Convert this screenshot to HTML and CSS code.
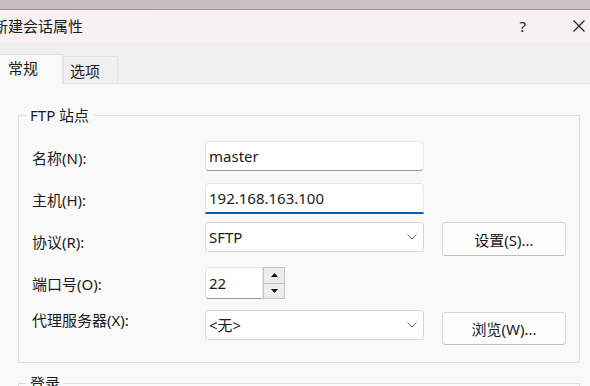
FILE: index.html
```html
<!DOCTYPE html>
<html lang="zh-CN">
<head>
    <meta charset="UTF-8">
    <title>新建会话属性</title>
    <link rel="stylesheet" href="styles.css">
</head>
<body>
    <div class="desk"></div>
    <div class="window">
        <div class="titlebar">
            <span class="title">新建会话属性</span>
            <span class="help">?</span>
            <span class="close">
                <svg width="12" height="12" viewBox="0 0 12 12"><path d="M0.5 0.5 L11.5 11.5 M11.5 0.5 L0.5 11.5" stroke="#1b1b1b" stroke-width="1.1" fill="none"/></svg>
            </span>
        </div>

        <div class="tabstrip">
            <div class="tab active">常规</div>
            <div class="tab">选项</div>
        </div>

        <div class="panel">
            <fieldset class="group">
                <legend>FTP 站点</legend>
                <div class="form">
                    <label class="lbl">名称(N):</label>
                    <div class="field"><div class="input">master</div></div>
                    <div></div>

                    <label class="lbl">主机(H):</label>
                    <div class="field"><div class="input focused">192.168.163.100</div></div>
                    <div></div>

                    <label class="lbl lbl-low">协议(R):</label>
                    <div class="field">
                        <div class="select">SFTP <svg class="chev" width="10" height="6" viewBox="0 0 10 6"><path d="M0.5 0.5 L5 5 L9.5 0.5" stroke="#606060" fill="none"/></svg></div>
                    </div>
                    <div><button class="btn">设置(S)...</button></div>

                    <label class="lbl">端口号(O):</label>
                    <div class="field port">
                        <div class="input num">22</div>
                        <div class="spin">
                            <span class="arrow"><svg width="7" height="4" viewBox="0 0 7 4"><path d="M3.5 0 L7 4 L0 4 Z" fill="#111"/></svg></span>
                            <span class="arrow"><svg width="7" height="4" viewBox="0 0 7 4"><path d="M0 0 L7 0 L3.5 4 Z" fill="#111"/></svg></span>
                        </div>
                    </div>
                    <div></div>

                    <label class="lbl lbl-high">代理服务器(X):</label>
                    <div class="field">
                        <div class="select">&lt;无&gt; <svg class="chev" width="10" height="6" viewBox="0 0 10 6"><path d="M0.5 0.5 L5 5 L9.5 0.5" stroke="#606060" fill="none"/></svg></div>
                    </div>
                    <div><button class="btn btn-low">浏览(W)...</button></div>
                </div>
            </fieldset>

            <fieldset class="group login">
                <legend>登录</legend>
                <div class="form"></div>
            </fieldset>
        </div>
    </div>
</body>
</html>
```

FILE: styles.css
```css
body {
    margin: 0;
    width: 590px;
    height: 386px;
    overflow: hidden;
    background: #f9f9f9;
    font-family: "Noto Sans", "Noto Sans CJK SC", sans-serif;
    font-size: 15px;
    color: #1b1b1b;
}

.desk {
    height: 9px;
    background: linear-gradient(90deg, #c7bdbd, #cec4c4);
    border-bottom: 1px solid #9e9595;
}

.titlebar {
    display: flex;
    align-items: center;
    height: 32px;
    background: #f7f1f1;
}

.title {
    flex: 1;
    margin-left: -7px;
    line-height: 20px;
}

.help {
    margin-right: 47px;
    font-size: 15px;
    line-height: 20px;
}

.close {
    display: flex;
    margin-right: 5px;
}

.tabstrip {
    display: flex;
    align-items: flex-end;
    height: 41px;
    background: #f0f0f0;
}

.tab {
    box-sizing: border-box;
    height: 27px;
    width: 55px;
    padding-left: 6px;
    line-height: 28px;
    background: #f0f0f0;
    border: 1px solid #e3e3e3;
    border-bottom: none;
}

.tab.active {
    position: relative;
    z-index: 1;
    height: 30px;
    width: 63px;
    margin-bottom: -1px;
    padding-left: 8px;
    line-height: 26px;
    background: #f9f9f9;
    border-left: none;
    border-right: 1px solid #e3e3e3;
}

.panel {
    border-top: 1px solid #e3e3e3;
    background: #f9f9f9;
    padding-top: 21px;
}

.group {
    box-sizing: border-box;
    width: 562px;
    margin: 0 0 0 18px;
    padding: 0 0 17px 13px;
    border: 1px solid #dedede;
}

.group legend {
    margin-left: -6px;
    padding: 0 4px;
    line-height: 20px;
}

.login {
    margin-top: 10px;
}

.form {
    display: grid;
    grid-template-columns: 155px 219px 124px;
    grid-template-rows: 42px 39px 45px 43px 35px;
    column-gap: 18px;
    align-items: start;
    margin-top: 16px;
}

.login .form {
    display: block;
    height: 40px;
}

.lbl {
    padding-top: 7px;
    line-height: 20px;
}

.lbl-low {
    padding-top: 10px;
}

.lbl-high {
    padding-top: 0;
}

.input, .select {
    box-sizing: border-box;
    height: 30px;
    padding-left: 3px;
    line-height: 28px;
    background: #ffffff;
    border: 1px solid #e6e6e6;
    border-bottom-color: #9a9a9a;
    border-radius: 4px;
}

.input.focused {
    height: 31px;
    border-bottom: 2px solid #005fb8;
    border-radius: 4px 4px 0 0;
}

.select {
    display: flex;
    justify-content: space-between;
    align-items: center;
    line-height: 20px;
    border-color: #d9d9d9;
    border-radius: 3px;
    padding-right: 6px;
}

.port {
    display: flex;
}

.input.num {
    width: 58px;
    height: 32px;
    line-height: 30px;
    border-radius: 4px 0 0 4px;
}

.spin {
    box-sizing: border-box;
    display: flex;
    flex-direction: column;
    width: 22px;
    height: 32px;
    border: 1px solid #c4c4c4;
    background: #c4c4c4;
    gap: 1px;
}

.arrow {
    flex: 1;
    display: flex;
    align-items: center;
    justify-content: center;
    background: #ececec;
}

.btn {
    box-sizing: border-box;
    width: 124px;
    height: 34px;
    margin: 0;
    padding: 0;
    font-family: inherit;
    font-size: 15px;
    color: #1b1b1b;
    background: #fdfdfd;
    border: 1px solid #d6d6d6;
    border-bottom-color: #bdbdbd;
    border-radius: 4px;
}

.btn-low {
    margin-top: 2px;
    height: 33px;
}
```
